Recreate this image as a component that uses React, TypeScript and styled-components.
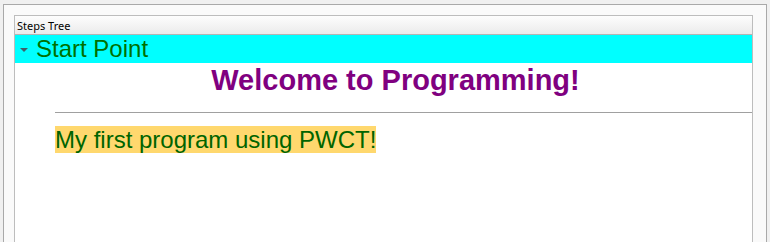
import React, { ReactElement } from "react";
import styled, { createGlobalStyle } from "styled-components";

const GlobalStyle = createGlobalStyle`
  html, body {
    margin: 0;
    padding: 0;
    background: #f0f0f0;
    overflow: hidden;
  }
`;

export default function App(): ReactElement {
  return (
    <>
      <GlobalStyle />
      <Frame>
        <Panel>
          <Header>Steps Tree</Header>
          <TreeRow>
            <Arrow />
            <RowLabel>Start Point</RowLabel>
          </TreeRow>
          <Content>
            <Title>Welcome to Programming!</Title>
            <Rule />
            <Paragraph>
              <Highlight>My first program using PWCT!</Highlight>
            </Paragraph>
          </Content>
        </Panel>
      </Frame>
    </>
  );
}

const Frame = styled.div`
  margin: 4px 0 0 3px;
  width: 764px;
  height: 238px;
  box-sizing: border-box;
  border: 1px solid #a9a9a9;
  border-bottom: 0;
  background: #fafafa;
  padding: 10px 13px 0 10px;
`;

const Panel = styled.div`
  box-sizing: border-box;
  width: 739px;
  height: 227px;
  border: 1px solid #bdbdbd;
  border-bottom: 0;
  background: #ffffff;
  display: flex;
  flex-direction: column;
`;

const Header = styled.div`
  height: 19px;
  box-sizing: border-box;
  padding: 3px 0 0 2px;
  font-family: "Noto Sans", "DejaVu Sans", sans-serif;
  font-size: 11px;
  line-height: 14px;
  color: #000;
  background: linear-gradient(180deg, #fdfdfd 0%, #ebebeb 100%);
  border-bottom: 1px solid #b4b4b4;
`;

const TreeRow = styled.div`
  height: 28px;
  background: #00ffff;
  display: flex;
  align-items: center;
  padding-left: 5px;
`;

const Arrow = styled.span`
  width: 0;
  height: 0;
  border-left: 4px solid transparent;
  border-right: 4px solid transparent;
  border-top: 4px solid #40606a;
  margin: 2px 8px 0 0;
`;

const RowLabel = styled.span`
  font-family: "Liberation Sans", Arial, sans-serif;
  font-size: 24px;
  line-height: 28px;
  color: #007000;
`;

const Content = styled.div`
  display: flex;
  flex-direction: column;
`;

const Title = styled.h1`
  margin: 0;
  padding: 0 0 0 24px;
  text-align: center;
  font-family: "Liberation Sans", Arial, sans-serif;
  font-weight: bold;
  font-size: 29px;
  line-height: 34px;
  color: #800080;
`;

const Rule = styled.hr`
  margin: 15px 0 0 40px;
  border: 0;
  border-top: 1px solid #a0a0a0;
  height: 0;
`;

const Paragraph = styled.p`
  margin: 13px 0 0 40px;
  font-family: "Liberation Sans", Arial, sans-serif;
  font-size: 24px;
  line-height: 27px;
`;

const Highlight = styled.span`
  background: #ffd86e;
  color: #006400;
  display: inline-block;
  height: 27px;
`;
